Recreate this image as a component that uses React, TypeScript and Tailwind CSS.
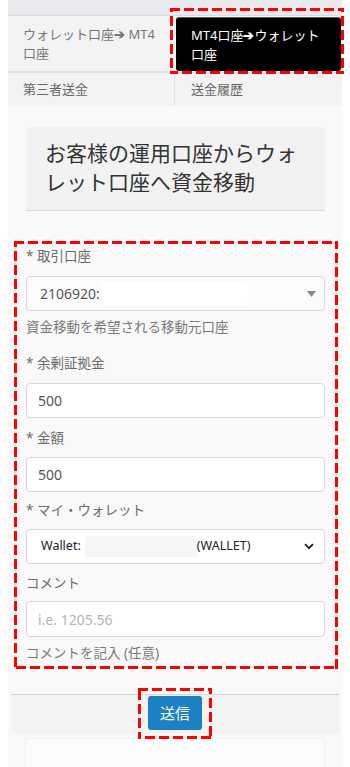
import type { ReactNode } from "react";

const font = { fontFamily: '"Noto Sans", "Noto Sans CJK JP", sans-serif' };

// red dashed annotation frame laid over its parent
function Dashes({ className = "" }: { className?: string }) {
  return (
    <svg className={`pointer-events-none absolute overflow-hidden ${className}`} width="100%" height="100%">
      <rect x="0" y="0" width="100%" height="100%" fill="none" stroke="#ff0000" strokeWidth="6" strokeDasharray="10 4" />
    </svg>
  );
}

function Label({ children, className = "" }: { children: ReactNode; className?: string }) {
  return <div className={`text-[13.5px] leading-[19px] text-[#6b6b6b] ${className}`}>{children}</div>;
}

function Help({ children }: { children: ReactNode }) {
  return <div className="mt-[7px] text-[13.5px] leading-[19px] text-[#7a7a7a]">{children}</div>;
}

function TextBox({ value, placeholder, className = "" }: { value?: string; placeholder?: string; className?: string }) {
  return (
    <div
      className={`flex h-[35px] items-center rounded-[4px] border border-[#d5d9df] bg-white pl-[11px] text-[14px] ${className}`}
    >
      {value ? <span className="text-[#555]">{value}</span> : <span className="text-[#b3b3b3]">{placeholder}</span>}
    </div>
  );
}

export default function App() {
  return (
    <div className="min-h-[767px] bg-white px-[8px]" style={font}>
      <div className="bg-[#f9f9f9]">
        <div className="h-[15px] bg-[#e9eaed]" />

        {/* tabs */}
        <div className="grid grid-cols-2 border-t border-[#dcdcdc] bg-[#f3f3f3]">
          <div className="h-[55px] pl-[15px] pt-[9px] text-[13px] leading-[19px] text-[#777]">
            ウォレット口座<b className="text-[#777]">➔</b> MT4
            <br />
            口座
          </div>
          <div className="relative h-[55px] p-[1px] pb-0">
            <div className="h-[54px] rounded-[3px] border-t border-[#5a5a5a] bg-black pl-[15px] pt-[8px] text-[13px] leading-[19px] text-white">
              MT4口座<b>➔</b>ウォレット
              <br />
              口座
            </div>
            <Dashes className="-left-[5px] -top-[8px] h-[66px] w-[174px]" />
          </div>
          <div className="col-span-2 h-[2px] bg-[#e2e2e2]" />
          <div className="flex h-[33px] items-center border-r border-[#e4e4e4] pl-[15px] text-[13px] text-[#666]">
            第三者送金
          </div>
          <div className="flex h-[33px] items-center pl-[16px] text-[13px] text-[#666]">送金履歴</div>
        </div>

        {/* body */}
        <div className="pt-[21px]">
          <div className="mx-[18px] mr-[17px] h-[84px] rounded-t-[3px] border-b border-[#d9d9d9] bg-[#f2f2f2] pl-[19px] pt-[12px] text-[21px] leading-[29px] text-[#333]">
            お客様の運用口座からウォ
            <br />
            レット口座へ資金移動
          </div>

          <div className="relative ml-[6px] mr-[4px] mt-[30px] px-[12px] pb-[6px] pl-[12px] pr-[13px] pt-[6px]">
            <Dashes className="inset-0" />
            <Label>* 取引口座</Label>
            <div className="mt-[10px] flex h-[35px] items-center rounded-[4px] border border-[#d5d9df] bg-[#fbfbfb] pl-[13px] pr-[8px] text-[14px] text-[#555]">
              <span>2106920:</span>
              <span className="ml-[2px] h-[23px] w-[146px] rounded-[4px] bg-white" />
              <svg className="ml-auto" width="9" height="6" viewBox="0 0 9 6">
                <path d="M0 0h9L4.5 6z" fill="#888" />
              </svg>
            </div>
            <Help>資金移動を希望される移動元口座</Help>

            <Label className="mt-[17px]">* 余剰証拠金</Label>
            <TextBox className="mt-[10px]" value="500" />

            <Label className="mt-[11px]">* 金額</Label>
            <TextBox className="mt-[9px]" value="500" />

            <Label className="mt-[9px]">* マイ・ウォレット</Label>
            <div className="mt-[9px] flex h-[35px] items-center rounded-[4px] border border-[#d5d9df] bg-white pl-[14px] pr-[10px] text-[12.5px] text-[#222]">
              <span>Wallet:</span>
              <span className="ml-[4px] h-[21px] w-[112px] bg-[#f6f6f6]" />
              <span>(WALLET)</span>
              <svg className="ml-auto" width="10" height="7" viewBox="0 0 10 7">
                <path d="M1 1.2l4 4 4-4" fill="none" stroke="#222" strokeWidth="1.8" />
              </svg>
            </div>

            <Label className="mt-[10px]">コメント</Label>
            <TextBox className="mt-[8px] h-[36px]" placeholder="i.e. 1205.56" />
            <Help>コメントを記入 (任意)</Help>
          </div>

          {/* footer */}
          <div className="mx-[3px] mt-[25px] flex h-[40px] justify-center rounded-b-[3px] border-t border-[#d6d6d6] bg-[#f3f3f3]">
            <div className="relative mt-[1px] h-[34px]">
              <button className="h-[34px] w-[54px] rounded-[3px] bg-[#1b80c4] text-[15px] text-white">送信</button>
              <Dashes className="-left-[10px] -top-[8px] h-[51px] w-[74px]" />
            </div>
          </div>

          <div className="mx-[17px] mt-[4px] h-[30px] border-x border-t border-[#f1f1f1] bg-[#fbfbfb]" />
        </div>
      </div>
    </div>
  );
}
